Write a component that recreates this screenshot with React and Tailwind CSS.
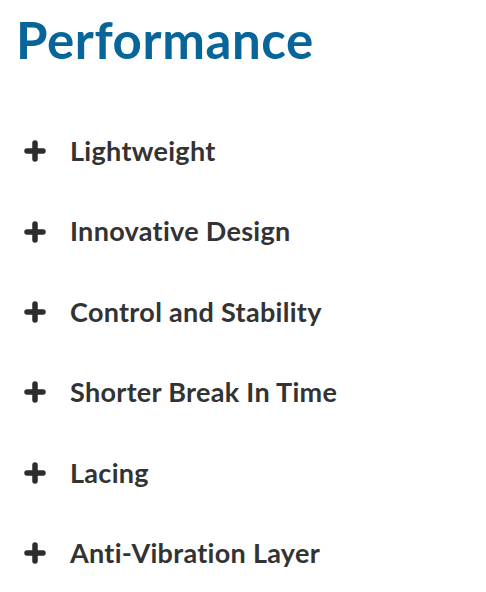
import React from 'react';

const items = [
    'Lightweight',
    'Innovative Design',
    'Control and Stability',
    'Shorter Break In Time',
    'Lacing',
    'Anti-Vibration Layer',
];

function PlusIcon() {
    return (
        <svg width="22" height="22" viewBox="0 0 22 22" className="shrink-0">
            <path d="M11 3v16M3 11h16" stroke="#2d2d2d" strokeWidth="5.5" strokeLinecap="round" />
        </svg>
    );
}

export default function App() {
    return (
        <div className="bg-white min-h-screen px-[16px] pt-[10px] [font-variant-ligatures:none]" style={{ fontFamily: 'Lato, "Open Sans", sans-serif' }}>
            <h1 className="text-[51px] leading-[60px] font-bold text-[#07659a] tracking-[0.6px]">Performance</h1>
            <ul className="mt-[41px]">
                {items.map(item => (
                    <li key={item} className="flex items-center gap-[24px] pl-[8px] h-[80.4px]">
                        <PlusIcon />
                        <span className="text-[27px] font-bold text-[#333333] tracking-[0.3px]">{item}</span>
                    </li>
                ))}
            </ul>
        </div>
    );
}
